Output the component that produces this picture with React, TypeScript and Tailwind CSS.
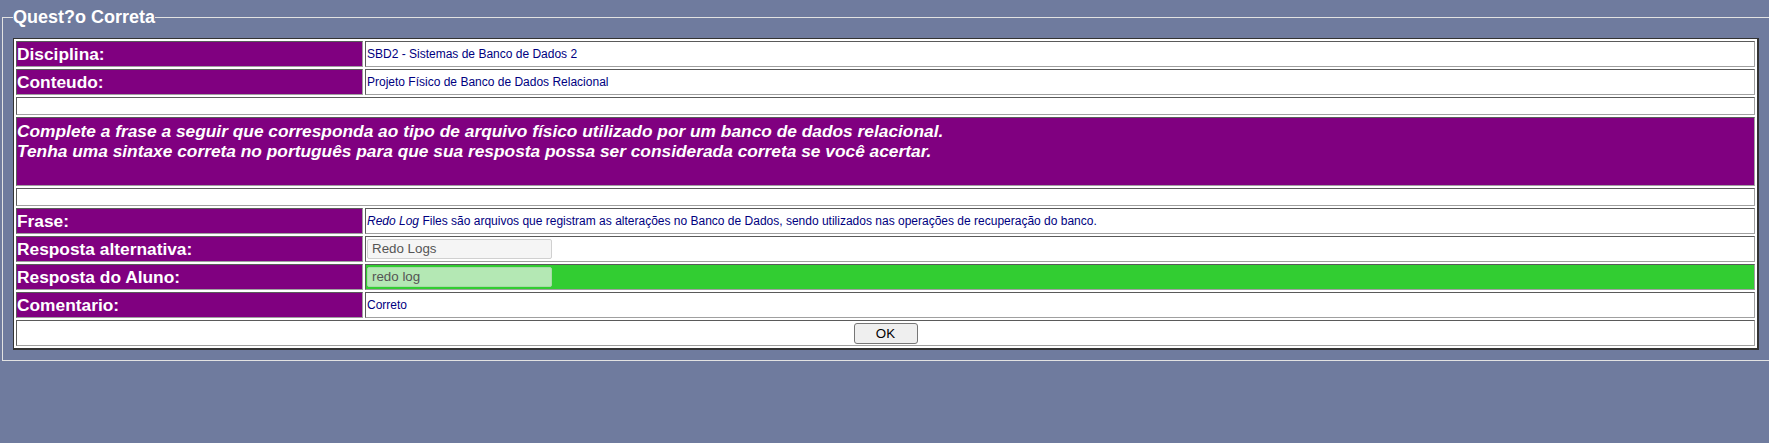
import React from "react";

const labelCell =
  "w-[347px] bg-[#800080] border border-t-[#5a5a5a] border-l-[#5a5a5a] border-b-[#a0a0a0] border-r-[#a0a0a0] pl-0 pr-[1px] text-[17.33px] leading-[20px] font-bold text-white";
const valueCell =
  "bg-white border border-t-[#5a5a5a] border-l-[#5a5a5a] border-b-[#a0a0a0] border-r-[#a0a0a0] px-[1px] text-[12px] leading-[14px] text-[#000080]";
const fullCell =
  "border border-t-[#5a5a5a] border-l-[#5a5a5a] border-b-[#a0a0a0] border-r-[#a0a0a0] p-0";

export default function App() {
  return (
    <div
      className="min-h-screen w-full overflow-hidden bg-[#6f7b9e] pt-[7px]"
      style={{ fontFamily: '"Liberation Sans", Arial, sans-serif' }}
    >
      <fieldset className="ml-[2px] border border-r-0 border-[#e2e2e2] pl-[10px] pt-[10px] pb-[10px]">
        <legend className="ml-0 px-0 text-[18px] leading-[21px] font-bold text-white">
          Quest?o Correta
        </legend>
        <table className="w-[1746px] border-separate border-spacing-[2px] bg-white border-t border-l border-r-2 border-b-2 border-[#333333]">
          <tbody>
            <tr className="h-[26px]">
              <td className={labelCell}>Disciplina:</td>
              <td className={valueCell}>SBD2 - Sistemas de Banco de Dados 2</td>
            </tr>
            <tr className="h-[26px]">
              <td className={labelCell}>Conteudo:</td>
              <td className={valueCell}>Projeto Físico de Banco de Dados Relacional</td>
            </tr>
            <tr className="h-[18px]">
              <td colSpan={2} className={fullCell + " bg-white"}></td>
            </tr>
            <tr className="h-[69px]">
              <td
                colSpan={2}
                className={
                  fullCell +
                  " bg-[#800080] pl-0 pr-[2px] pt-[3px] align-top text-[17.33px] leading-[20px] font-bold italic text-white"
                }
              >
                Complete a frase a seguir que corresponda ao tipo de arquivo físico utilizado por um banco de dados relacional.
                <br />
                Tenha uma sintaxe correta no português para que sua resposta possa ser considerada correta se você acertar.
              </td>
            </tr>
            <tr className="h-[18px]">
              <td colSpan={2} className={fullCell + " bg-white"}></td>
            </tr>
            <tr className="h-[26px]">
              <td className={labelCell}>Frase:</td>
              <td className={valueCell}>
                <i>Redo Log</i> Files são arquivos que registram as alterações no Banco de Dados, sendo utilizados nas operações de recuperação do banco.
              </td>
            </tr>
            <tr className="h-[26px]">
              <td className={labelCell}>Resposta alternativa:</td>
              <td className={valueCell}>
                <div className="flex h-[20px] w-[185px] items-center rounded-[2px] border border-[#d0d0d0] bg-[#f5f5f5] pl-[4px] text-[13.33px] text-[#555555]">
                  Redo Logs
                </div>
              </td>
            </tr>
            <tr className="h-[26px]">
              <td className={labelCell}>Resposta do Aluno:</td>
              <td className={valueCell + " !bg-[#32cd32]"}>
                <div className="flex h-[20px] w-[185px] items-center rounded-[2px] border border-[#a6dca6] bg-[#b4e8b4] pl-[4px] text-[13.33px] text-[#555555]">
                  redo log
                </div>
              </td>
            </tr>
            <tr className="h-[26px]">
              <td className={labelCell}>Comentario:</td>
              <td className={valueCell}>Correto</td>
            </tr>
            <tr className="h-[26px]">
              <td colSpan={2} className={fullCell + " bg-white text-center"}>
                <button className="inline-flex h-[21px] w-[64px] items-center justify-center rounded-[3px] border border-[#767676] bg-[#efefef] text-[13.33px] text-black align-middle">
                  OK
                </button>
              </td>
            </tr>
          </tbody>
        </table>
      </fieldset>
    </div>
  );
}
